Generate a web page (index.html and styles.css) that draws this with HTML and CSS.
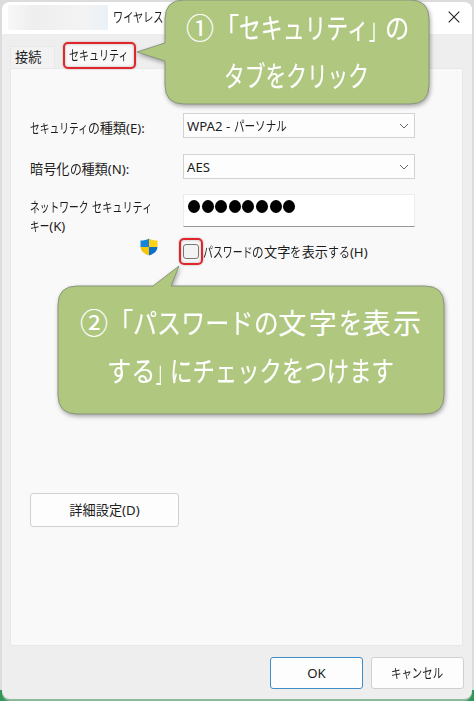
FILE: index.html
```html
<!DOCTYPE html>
<html lang="ja">
<head>
<meta charset="utf-8">
<title>ワイヤレス</title>
<link rel="stylesheet" href="styles.css">
</head>
<body>
<div class="desktop">
  <div class="window">
    <header class="titlebar">
      <span class="redacted"></span>
      <span class="title"><span class="k" style="--n:5;--s:.77">ワイヤレス</span></span>
      <svg class="close" viewBox="0 0 12 12"><path d="M.7.7l10.6 10.6M11.3.7L.7 11.3"/></svg>
    </header>
    <nav class="tabs">
      <div class="tab">接続</div>
      <div class="tab active"><span class="k" style="--n:6;--s:.76">セキュリティ</span></div>
    </nav>
    <main class="panel">
      <div class="row">
        <label><span class="k" style="--n:6;--s:.74">セキュリティ</span><span class="k" style="--n:1;--s:.9">の</span>種類(E):</label>
        <div class="select"><span>WPA2 - <span class="k" style="--n:5;--s:.8">パーソナル</span></span><svg viewBox="0 0 10 6"><path d="M1 1l4 4 4-4"/></svg></div>
      </div>
      <div class="row">
        <label>暗号化<span class="k" style="--n:1;--s:.9">の</span>種類(N):</label>
        <div class="select"><span>AES</span><svg viewBox="0 0 10 6"><path d="M1 1l4 4 4-4"/></svg></div>
      </div>
      <div class="row key">
        <label><span class="k" style="--n:6;--s:.74">ネットワーク</span> <span class="k" style="--n:6;--s:.77">セキュリティ</span><br><span class="k" style="--n:2;--s:.73">キー</span>(K)</label>
        <div class="password"><i></i><i></i><i></i><i></i><i></i><i></i><i></i><i></i></div>
      </div>
      <div class="show">
        <svg class="shield" viewBox="0 0 18 18">
          <path fill="#1685d9" d="M9 .5C6.500 2 4 2.500.5 2.500V9H9z"/>
          <path fill="#fcd116" d="M9 .5c2.500 1.500 5 2 8.500 2V9H9z"/>
          <path fill="#f5c50d" d="M.5 9c.3 4.500 4 7 8.500 8.500V9z"/>
          <path fill="#0c70c4" d="M17.500 9c-.3 4.500-4 7-8.500 8.500V9z"/>
        </svg>
        <span class="mark"><span class="check"></span></span>
        <span class="show-label"><span class="k" style="--n:5;--s:.75">パスワード</span><span class="k" style="--n:1;--s:.88">の</span>文字<span class="k" style="--n:1;--s:.85">を</span>表示<span class="k" style="--n:2;--s:.83">する</span>(H)</span>
      </div>
      <div class="button advanced">詳細設定(D)</div>
    </main>
    <footer class="actions">
      <div class="button ok">OK</div>
      <div class="button cancel"><span class="k" style="--n:5;--s:.79">キャンセル</span></div>
    </footer>
  </div>

  <section class="callout first">
    <svg class="bubble" viewBox="0 0 300 112"><path d="M48 0H274Q293 0 293 19V85Q293 104 274 104H48Q29 104 29 85V61L1 52L29 43V19Q29 0 48 0Z"/></svg>
    <p class="line one">①<span class="k" style="--n:1;--s:.9">「</span><span class="k" style="--n:6;--s:.78">セキュリティ</span><span class="k" style="--n:1;--s:.57">」</span><span class="k" style="--n:1;--s:.87">の</span></p>
    <p class="line two"><span class="k" style="--n:7;--s:.74">タブをクリック</span></p>
  </section>

  <section class="callout second">
    <svg class="bubble" viewBox="0 0 400 160"><path d="M20 21H96L122 1L114 21H368Q387 21 387 40V130Q387 149 368 149H20Q1 149 1 130V40Q1 21 20 21Z"/></svg>
    <p class="line three">②<span class="k" style="--n:1;--s:.9">「</span><span class="k" style="--n:5;--s:.86">パスワード</span><span class="k" style="--n:1;--s:.88">の</span><span class="wide">文字</span><span class="k" style="--n:1;--s:.83">を</span><span class="wide">表示</span></p>
    <p class="line four"><span class="k" style="--n:2;--s:.87">する</span><span class="k" style="--n:1;--s:.5">」</span><span class="k" style="--n:10;--s:.8">にチェックをつけます</span></p>
  </section>
</div>
</body>
</html>
```
FILE: styles.css
```css
* { box-sizing: border-box; }
body { margin: 0; }
.desktop {
  position: relative;
  width: 474px;
  height: 701px;
  padding: 2px 2px 2px 2px;
  overflow: hidden;
  background: linear-gradient(#dcdcdc 0 690px, #35965a 690px);
  font: 13.2px/20px "Noto Sans", "Noto Sans CJK JP", sans-serif;
  color: #1c1c1c;
}
.window {
  height: 697px;
  display: flex;
  flex-direction: column;
  background: #eee;
  border-radius: 8px;
  overflow: hidden;
  box-shadow: 0 2px 0 #8fb99c;
}
.k {
  display: inline-block;
  transform: scaleX(var(--s));
  transform-origin: left;
  margin-right: calc((var(--s) - 1) * var(--n) * 1em);
  white-space: nowrap;
}
.titlebar {
  display: flex;
  align-items: center;
  height: 32px;
  padding: 0 12px 2px 6px;
  background: #fff;
}
.redacted {
  width: 100px;
  height: 25px;
  background: linear-gradient(90deg, #f8f8f8, #eee 25%, #f3f3f3 75%, #eaf1f6);
}
.title { margin-left: 5px; }
.close { width: 12px; height: 12px; margin-left: auto; }
.close path { fill: none; stroke: #222; stroke-width: 1.1; }
.tabs { display: flex; align-items: flex-end; height: 34px; padding-left: 8px; }
.tab { width: 45px; height: 22px; padding-left: 4px; background: #f2f2f2; border: 1px solid #e9e9e9; border-bottom: 0; line-height: 21px; }
.tab.active {
  width: 73px;
  height: 27px;
  margin: 0 0 -1px 8px;
  padding-left: 4px;
  border: 2px solid #e0262d;
  border-radius: 5px;
  background: #f8f8f8;
  line-height: 23px;
  box-shadow: 0 0 2px #b99, inset 0 0 3px #bbb;
  position: relative;
}
.panel {
  height: 578px;
  margin: 0 9px 0 8px;
  padding: 44px 0 0 19px;
  background: #f9f9f9;
  border: 1px solid #e8e8e8;
}
.row { display: flex; height: 41px; }
.row label { width: 153px; padding-top: 5px; }
.select {
  display: flex;
  align-items: center;
  justify-content: space-between;
  width: 232px;
  height: 25px;
  padding: 0 5px 0 3px;
  background: #fdfdfd;
  border: 1px solid #d2d2d2;
}
.select svg { width: 10px; height: 6px; }
.select path { fill: none; stroke: #666; stroke-width: 1; }
.key label { padding-top: 3px; line-height: 19px; white-space: nowrap; }
.password {
  display: flex;
  gap: 1.6px;
  width: 232px;
  height: 33px;
  margin-top: -1px;
  padding: 5px 0 0 4px;
  background: #fff;
  border: 1px solid #ececec;
  border-bottom-color: #999;
}
.password i { width: 12px; height: 13px; border-radius: 50%; background: #000; }
.show { display: flex; height: 30px; padding: 2px 0 0 110px; }
.shield { width: 18px; height: 18px; }
.mark {
  width: 24px;
  height: 27px;
  margin-left: 21px;
  padding: 4px 2px;
  border: 2px solid #e0262d;
  border-radius: 5px;
  box-shadow: 0 0 2px #b99, inset 0 0 3px #bbb;
}
.check { display: block; width: 16px; height: 15px; border: 1px solid #777; border-radius: 3px; background: #f3f3f3; }
.show-label { padding-top: 4px; white-space: nowrap; }
.button {
  display: flex;
  align-items: center;
  justify-content: center;
  background: #fdfdfd;
  border: 1px solid #d0d0d0;
  border-radius: 3px;
}
.advanced { width: 149px; height: 34px; margin-top: 227px; }
.actions { display: flex; justify-content: flex-end; gap: 8px; padding: 11px 8px 0 0; }
.actions .button { width: 93px; height: 32px; }
.actions .ok { border-color: #3e8cc8; }
.callout { position: absolute; font-size: 28px; line-height: 48px; color: #fff; -webkit-text-stroke: .15px #fff; }
.first { left: 136px; top: 0; width: 300px; height: 112px; padding-top: 4px; }
.second { left: 57px; top: 265px; width: 400px; height: 160px; padding-top: 34px; }
.bubble { position: absolute; inset: 0; width: 100%; height: 100%; filter: drop-shadow(1px 2px 2px #0005); }
.bubble path { fill: #afc77f; stroke: #8a957c; stroke-width: 1; }
.line { position: relative; margin: 0; height: 48px; white-space: nowrap; }
.one { padding-left: 50px; }
.two { padding-left: 88px; }
.three { padding-left: 23px; }
.four { padding-left: 50px; }
.wide { letter-spacing: 2.500px; }
```
